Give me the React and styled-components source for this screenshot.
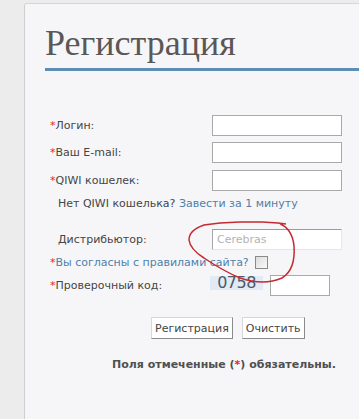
import styled, { createGlobalStyle } from "styled-components";

const Global = createGlobalStyle`
  html, body {
    margin: 0;
    padding: 0;
    background: #ececec;
  }
  body {
    font-family: "DejaVu Sans", Verdana, sans-serif;
    font-size: 11px;
    color: #454545;
  }
`;

const Page = styled.div`
  width: 359px;
  height: 419px;
  overflow: hidden;
  padding: 3px 0 0 24px;
  box-sizing: border-box;
`;

const Panel = styled.div`
  position: relative;
  height: 100%;
  background: #f6f6f8;
  border-left: 1px solid #cfcfcf;
  border-top: 1px solid #d6d6d6;
  border-top-left-radius: 3px;
  padding: 0 0 0 20px;
`;

const Title = styled.h1`
  margin: 0;
  padding-top: 17px;
  font-family: "Liberation Serif", "Times New Roman", serif;
  font-weight: normal;
  font-size: 36px;
  line-height: 44px;
  color: #5b5756;
  padding-bottom: 3px;
  border-bottom: 3px solid #5d8db2;
`;

const Form = styled.div`
  padding: 44px 0 0 5px;
  display: flex;
  flex-direction: column;
`;

const Row = styled.div`
  display: flex;
  align-items: center;
  height: ${(p) => p.$h || 21}px;
  margin-bottom: ${(p) => p.$mb || 0}px;
`;

const Label = styled.div`
  width: 162px;
  padding-left: ${(p) => (p.$plain ? 8 : 0)}px;
  box-sizing: border-box;
`;

const Star = styled.span`
  color: #e0242b;
`;

const Input = styled.input`
  width: 130px;
  height: 21px;
  box-sizing: border-box;
  border: 1px solid #a9a9a9;
  background: #fff;
  margin: 0;
  padding: 0 4px;
  font: inherit;
`;

const DistInput = styled(Input)`
  border-top-color: #9a9a9a;
  border-left-color: #a8a8a8;
  border-right-color: #e6e6e6;
  border-bottom-color: #e6e6e6;
  color: #b3b3b3;
  &::placeholder {
    color: #b3b3b3;
  }
`;

const Hint = styled.div`
  padding-left: 8px;
`;

const Link = styled.a`
  color: #4f7fab;
  text-decoration: none;
`;

const Check = styled.span`
  display: inline-block;
  width: 11px;
  height: 11px;
  margin-left: 6px;
  border: 1px solid #8a8a8a;
  background: linear-gradient(135deg, #dcdcdc, #fafafa);
  vertical-align: middle;
`;

const Captcha = styled.div`
  width: 53px;
  height: 14px;
  margin-left: -2px;
  background: #e1ebf6;
  color: #4f5866;
  font-size: 16px;
  line-height: 14px;
  text-align: center;
  letter-spacing: -0.5px;
  align-self: flex-start;
  margin-top: 2px;
`;

const SmallInput = styled(Input)`
  width: 60px;
  margin-left: 7px;
`;

const Buttons = styled.div`
  display: flex;
  gap: 9px;
  padding-left: 101px;
  margin-top: 21px;
`;

const Button = styled.button`
  height: 22px;
  padding: 0 3px;
  background: #fff;
  border: 1px solid #d8d8d8;
  border-right-color: #8a8a8a;
  border-bottom-color: #8a8a8a;
  font: inherit;
  color: #454545;
  cursor: pointer;
`;

const Note = styled.p`
  margin: 19px 0 0 62px;
  font-weight: bold;
  color: #505050;
`;

const Scribble = styled.svg`
  position: absolute;
  left: 0;
  top: 0;
  z-index: 2;
  pointer-events: none;
`;

export default function App() {
  return (
    <Page>
      <Global />
      <Panel>
        <Title>Регистрация</Title>
        <Form>
          <Row $mb={6}>
            <Label>
              <Star>*</Star>Логин:
            </Label>
            <Input />
          </Row>
          <Row $mb={7}>
            <Label>
              <Star>*</Star>Ваш E-mail:
            </Label>
            <Input />
          </Row>
          <Row>
            <Label>
              <Star>*</Star>QIWI кошелек:
            </Label>
            <Input />
          </Row>
          <Row $h={24} $mb={14}>
            <Hint>
              Нет QIWI кошелька? <Link>Завести за 1 минуту</Link>
            </Hint>
          </Row>
          <Row>
            <Label $plain>Дистрибьютор:</Label>
            <DistInput placeholder="Cerebras" />
          </Row>
          <Row $h={24}>
            <Star>*</Star>
            <Link>Вы согласны с правилами сайта?</Link>
            <Check />
          </Row>
          <Row $h={22}>
            <Label>
              <Star>*</Star>Проверочный код:
            </Label>
            <Captcha>0758</Captcha>
            <SmallInput />
          </Row>
          <Buttons>
            <Button>Регистрация</Button>
            <Button>Очистить</Button>
          </Buttons>
          <Note>
            Поля отмеченные (<Star>*</Star>) обязательны.
          </Note>
        </Form>
        <Scribble width="335" height="415" viewBox="25 4 335 415">
          <path
            d="M286 224 L278 223 L262 222 L240 222 L220 223 L204 225 C195 228 189 233 189 240 C190 248 196 253 204 258 C216 266 228 273 240 278 C252 282 268 284 282 278 C292 272 295 260 294 246 C293 236 290 228 280 224"
            fill="none"
            stroke="#c42a31"
            strokeWidth="1.5"
          />
        </Scribble>
      </Panel>
    </Page>
  );
}
